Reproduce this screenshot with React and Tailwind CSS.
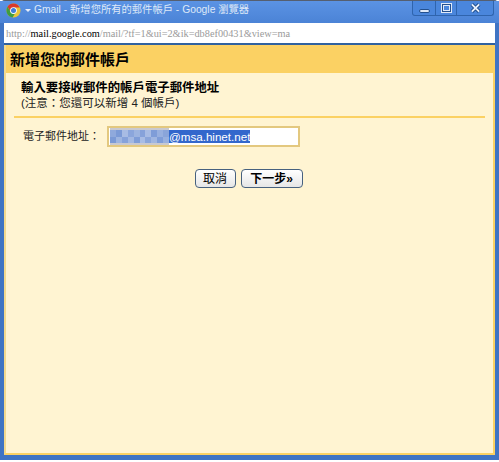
const SANS = "font-['Liberation_Sans','Noto_Sans_CJK_TC',sans-serif]";

function ChromeLogo() {
  return (
    <svg width="15" height="15" viewBox="0 0 16 16" className="shrink-0">
      <circle cx="8" cy="8" r="7.5" fill="#e8c53a" />
      <path d="M8 .5A7.5 7.5 0 0 0 1.600 4L4.600 9 8 4.800h6.500A7.500 7.500 0 0 0 8 .5z" fill="#d8392b" />
      <path d="M1.600 4A7.500 7.500 0 0 0 7 15.400L10 10.500 5 9.500z" fill="#3f9c3f" />
      <circle cx="8" cy="8" r="3.600" fill="#fff" />
      <circle cx="8" cy="8" r="2.700" fill="#3f7fd8" />
    </svg>
  );
}

function WinButton({ kind, width }) {
  return (
    <div className={`flex h-full items-center justify-center border-r border-[#2f64ad] last:border-r-0 ${width}`}>
      {kind === "min" && <div className="mt-[6px] h-[4px] w-[11px] rounded-[2px] border border-[#23508f] bg-[#dfe9f8]" />}
      {kind === "max" && (
        <div className="flex h-[10px] w-[11px] items-center justify-center border border-[#dfe9f8] bg-[#23508f] p-[1px]">
          <div className="flex h-full w-full items-center justify-center bg-[#dfe9f8] p-[1px]">
            <div className="h-full w-full bg-[#4a86dc]" />
          </div>
        </div>
      )}
      {kind === "close" && (
        <svg width="11" height="10" viewBox="0 0 12 11">
          <path d="M2 1.500 10 9.500M10 1.500 2 9.500" stroke="#23508f" strokeWidth="4" />
          <path d="M2 1.500 10 9.500M10 1.500 2 9.500" stroke="#e6eefa" strokeWidth="2" />
        </svg>
      )}
    </div>
  );
}

const blurTop = ["bg-[#8fa9dc]", "bg-[#7b9ad6]", "bg-[#a8bce4]", "bg-[#8ba6dc]", "bg-[#9db4e0]", "bg-[#86a2da]", "bg-[#a8bce4]", "bg-[#7f9dd8]", "bg-[#98b0df]", "bg-[#8aa5da]"];
const blurBottom = ["bg-[#7b9ad6]", "bg-[#9db4e0]", "bg-[#86a2da]", "bg-[#a3b8e2]", "bg-[#7f9dd8]", "bg-[#a8bce4]", "bg-[#8aa5da]", "bg-[#a0b6e1]", "bg-[#7f9dd8]", "bg-[#98b0df]"];

function Button({ children, bold, width }) {
  return (
    <button className={`flex h-[19px] items-center justify-center rounded-[4px] border border-[#47617f] bg-gradient-to-b from-white to-[#e6e6e6] text-[12px] leading-none text-black ${width} ${bold ? "font-bold" : ""}`}>
      {children}
    </button>
  );
}

export default function App() {
  return (
    <div className={`h-[462px] w-[499px] overflow-hidden bg-white ${SANS}`}>
      <div className="flex h-[460px] w-[499px] flex-col rounded-t-[5px] border-t border-[#555f70] bg-[#3f74c4]">
        <div className="flex h-[22px] shrink-0 items-start bg-gradient-to-b from-[#5b93e4] to-[#4b83d6]">
          <div className="flex h-[19px] flex-1 items-center pl-[6px]">
            <ChromeLogo />
            <div className="ml-[4px] h-0 w-0 border-x-[3px] border-t-[3px] border-x-transparent border-t-[#e8eefa]" />
            <div className="ml-[3px] whitespace-nowrap text-[10.300px] leading-none text-[#dfe9f8]">
              Gmail - 新增您所有的郵件帳戶 - Google 瀏覽器
            </div>
          </div>
          <div className="mr-[5px] flex h-[15px] w-[82px] items-center overflow-hidden rounded-b-[3px] border-x border-b border-[#2f64ad] bg-[#4a86dc]">
            <WinButton kind="min" width="w-[23px]" />
            <WinButton kind="max" width="w-[21px]" />
            <WinButton kind="close" width="flex-1" />
          </div>
        </div>
        <div className="mx-[4px] flex h-[22px] shrink-0 items-center border-b-2 border-[#30619f] bg-white pl-[2px] pt-[1px] font-['Liberation_Serif','Noto_Sans_CJK_TC',serif] text-[10.300px] text-[#9a9a9a]">
          <span>http://</span>
          <span className="text-black">mail.google.com</span>
          <span>/mail/?tf=1&amp;ui=2&amp;ik=db8ef00431&amp;view=ma</span>
        </div>
        <div className="flex min-h-0 flex-1 px-[4px] pb-[5px]">
          <div className="flex flex-1 flex-col border-[2px] border-t-0 border-[#fbd163] border-l-[#f2d98f] bg-[#fff4d2]">
            <div className="flex h-[28px] shrink-0 items-center bg-[#fbd163] pl-[4px] text-[15px] font-bold leading-none text-black">
              新增您的郵件帳戶
            </div>
            <div className="pl-[15px] pt-[8px]">
              <div className="text-[12.400px] font-bold leading-[15px] text-black">輸入要接收郵件的帳戶電子郵件地址</div>
              <div className="text-[11.500px] leading-[15px] text-[#222]">(注意：您還可以新增 4 個帳戶)</div>
            </div>
            <div className="mx-[8px] mt-[5px] h-[2px] bg-[#fbd163]" />
            <div className="mt-[8px] flex items-center pl-[17px]">
              <div className="w-[84px] text-[11px] leading-none text-[#222]">電子郵件地址：</div>
              <div className="flex h-[21px] w-[193px] items-center border-2 border-[#e3c87f] bg-white pl-[1px]">
                <div className="flex h-[17px] w-[59px] shrink-0 items-center bg-[#c9c9d0]">
                  <div className="flex h-[13px] w-full flex-col">
                    <div className="flex h-1/2 w-full">
                      {blurTop.map((c, i) => (
                        <div key={i} className={`h-full flex-1 ${c}`} />
                      ))}
                    </div>
                    <div className="flex h-1/2 w-full">
                      {blurBottom.map((c, i) => (
                        <div key={i} className={`h-full flex-1 ${c}`} />
                      ))}
                    </div>
                  </div>
                </div>
                <div className="flex h-[13px] items-center bg-[#3367cc] text-[11.600px] leading-none text-white">@msa.hinet.net</div>
              </div>
            </div>
            <div className="mt-[22px] flex justify-center gap-[5px] pr-[2px]">
              <Button width="w-[41px]">取消</Button>
              <Button bold width="w-[62px]">下一步»</Button>
            </div>
          </div>
        </div>
      </div>
    </div>
  );
}
